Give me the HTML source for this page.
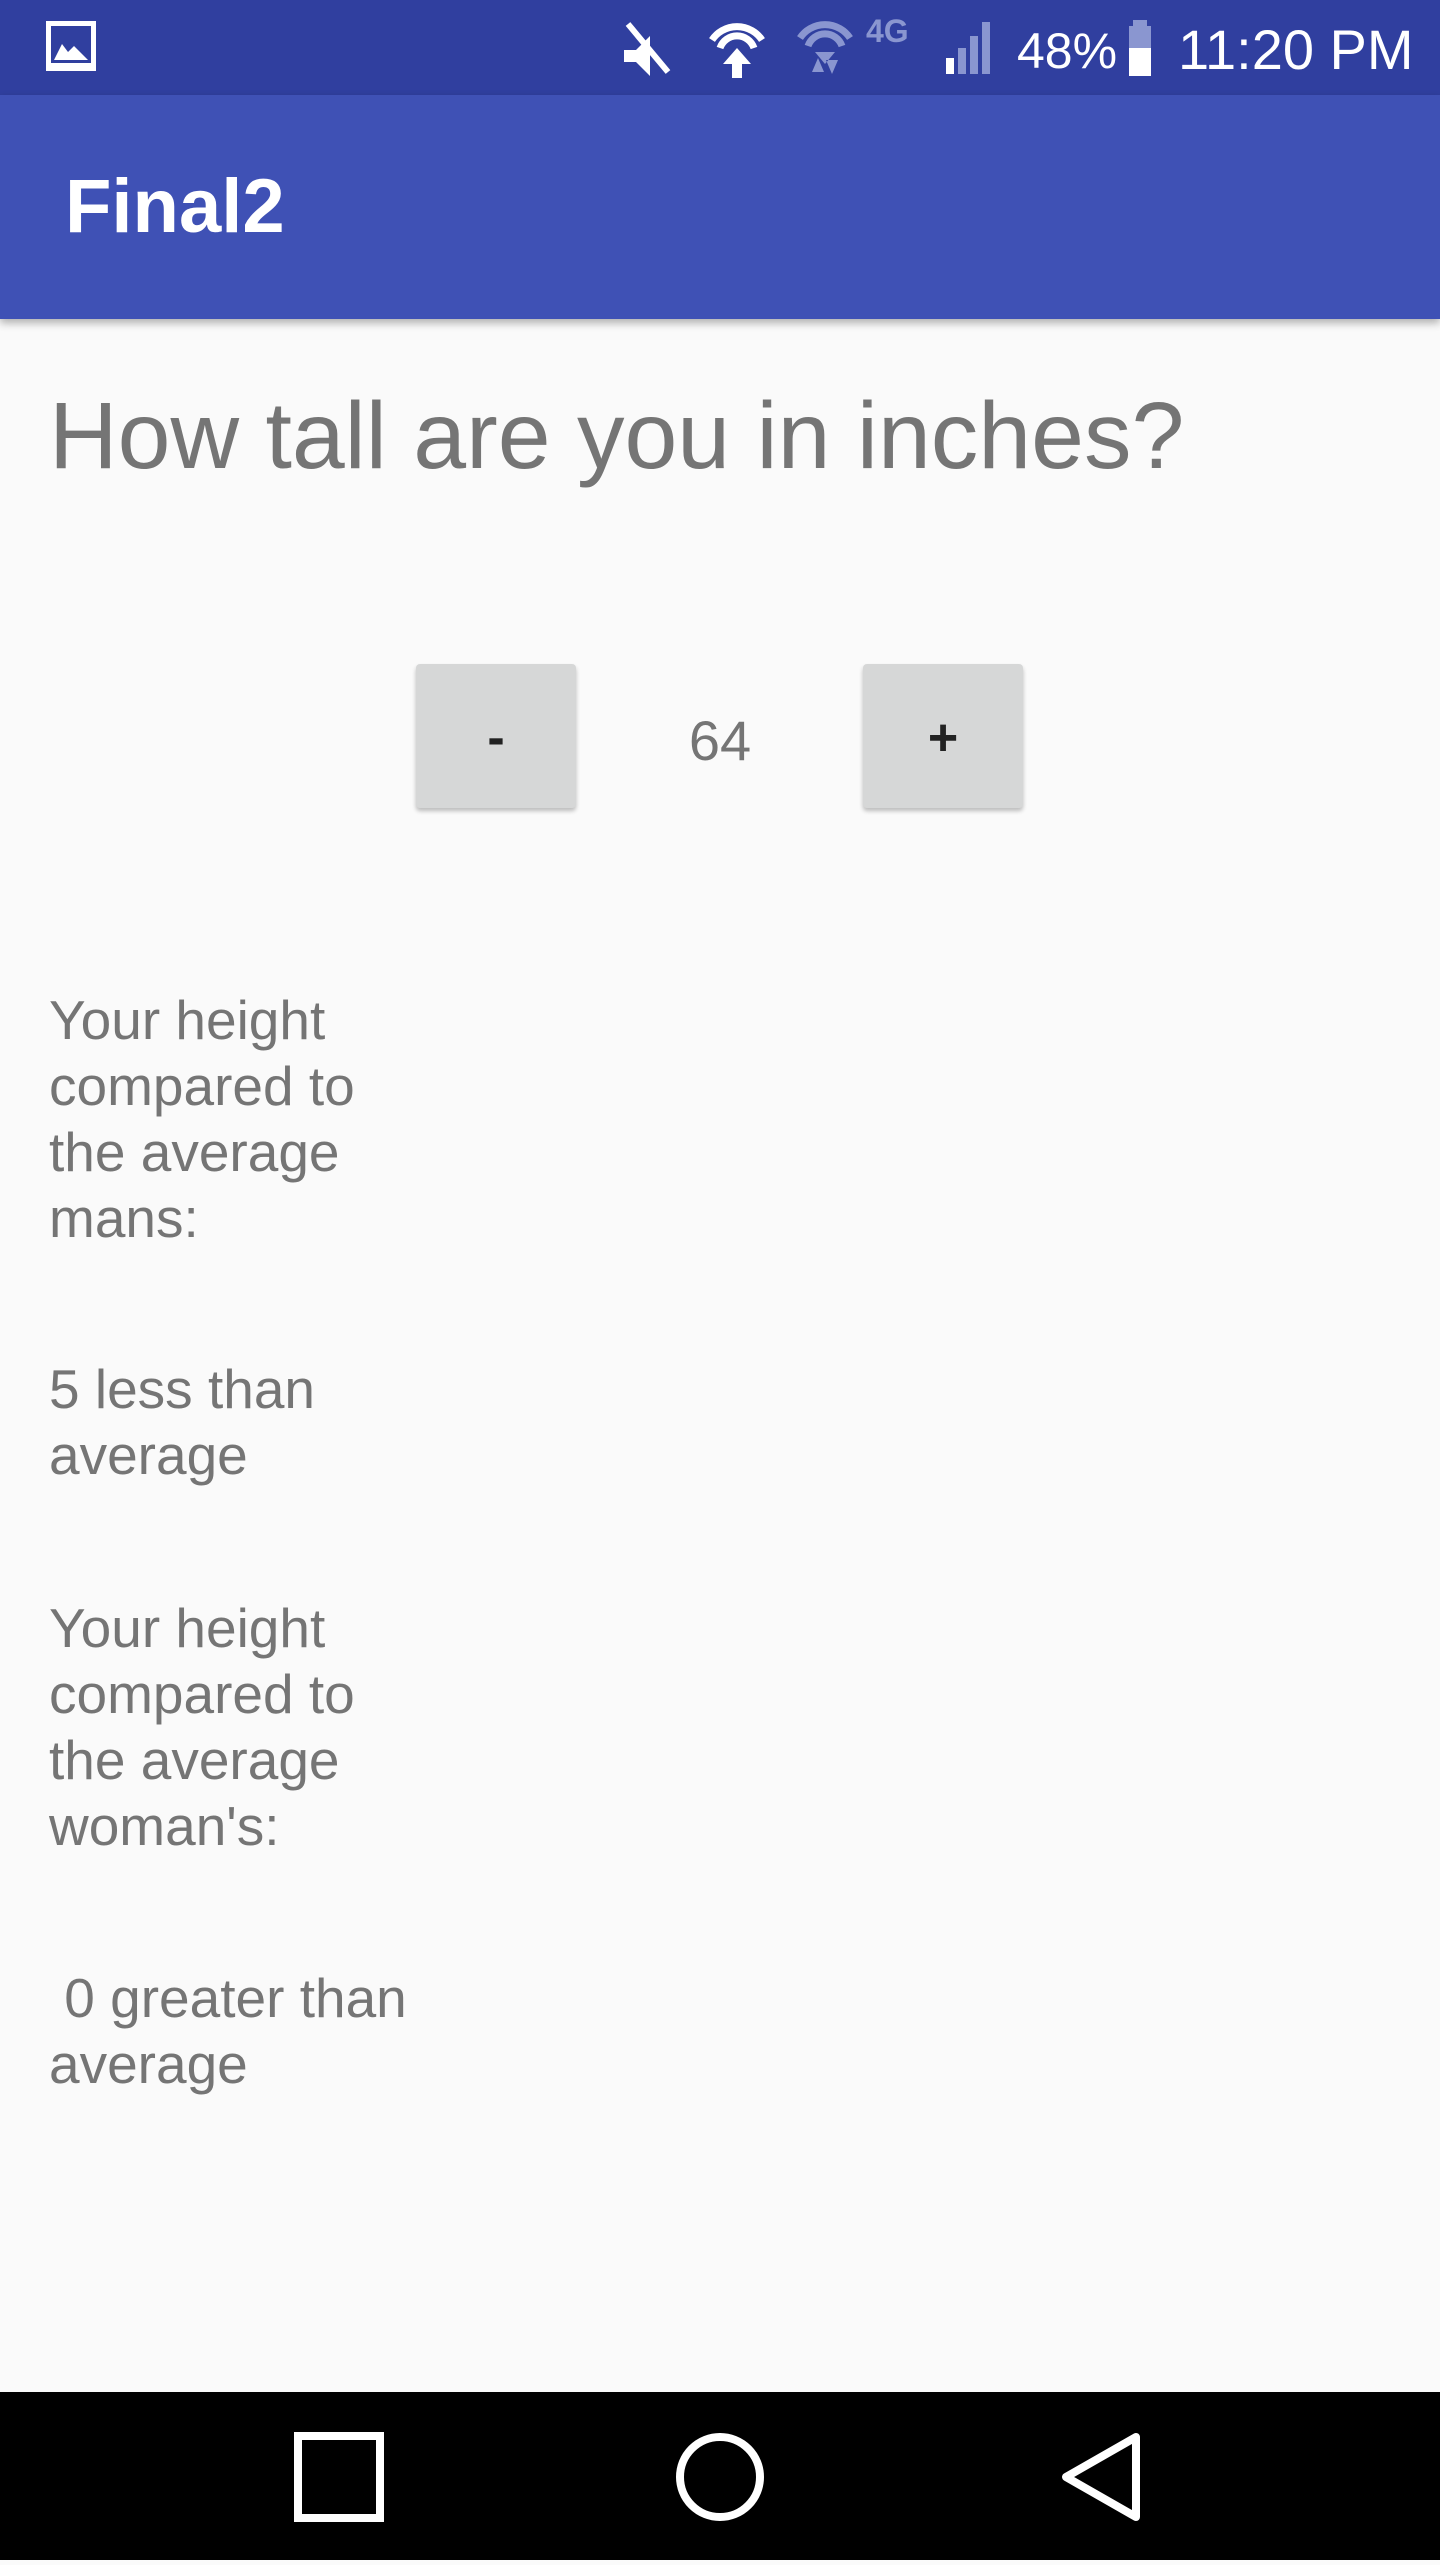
<!DOCTYPE html>
<html><head><meta charset="utf-8"><style>
*{margin:0;padding:0;box-sizing:border-box}
body{width:1440px;height:2560px;background:#FAFAFA;font-family:"Liberation Sans",sans-serif;position:relative;overflow:hidden}
.sb{position:absolute;top:0;left:0;width:1440px;height:95px;background:#303F9F}
.ab{position:absolute;top:95px;left:0;width:1440px;height:224px;background:#3F51B5;box-shadow:0 4px 8px rgba(0,0,0,.3)}
.t{position:absolute;color:#757575;white-space:nowrap}
.btn{position:absolute;width:160px;height:144px;background:#D6D7D7;border-radius:4px;box-shadow:0 3px 4px rgba(0,0,0,.25);color:#222;font-size:52px;font-weight:bold;text-align:center;line-height:148px}
.nav{position:absolute;top:2392px;left:0;width:1440px;height:168px;background:#000}
.p{font-size:55px;line-height:66px;left:49px}
</style></head><body>
<div class="sb">
<svg width="1440" height="95" style="position:absolute;left:0;top:0">
<rect x="46" y="21" width="50" height="50" fill="#fff"/><rect x="51" y="26" width="40" height="37" fill="#303F9F"/>
<path d="M54 60 L62 44 L68 52 L74 46 L88 60 Z" fill="#fff"/>
<path d="M624 50 h12 l14 -14 v40 l-14 -14 h-12z" fill="#fff"/><path d="M628 24 L668 72" stroke="#fff" stroke-width="6"/>
<path d="M712 40 a30 30 0 0 1 50 0 M720 48 a18 18 0 0 1 34 0" stroke="#fff" stroke-width="7" fill="none"/>
<path d="M737 48 l-14 16 h9 v14 h10 v-14 h9z" fill="#fff"/>
<path d="M800 38 a30 30 0 0 1 50 0 M808 46 a18 18 0 0 1 34 0" stroke="#8A96D0" stroke-width="7" fill="none"/>
<path d="M815 52 h20 l-10 12z M812 72 l6 -14 l6 14z M826 60 l6 14 l6 -14z" fill="#8A96D0"/>
<text x="866" y="42" font-size="32" font-weight="bold" fill="#8A96D0" font-family="Liberation Sans">4G</text>
<rect x="946" y="58" width="8" height="16" fill="#fff"/><rect x="958" y="48" width="8" height="26" fill="#8A96D0"/><rect x="970" y="36" width="8" height="38" fill="#8A96D0"/><rect x="982" y="22" width="8" height="52" fill="#8A96D0"/>
<text x="1017" y="68" font-size="50" fill="#fff" font-family="Liberation Sans">48%</text>
<rect x="1133" y="20" width="14" height="8" fill="#8A96D0"/><rect x="1129" y="26" width="22" height="22" fill="#8A96D0"/><rect x="1129" y="48" width="22" height="28" fill="#fff"/>
<text x="1178" y="69" font-size="56" fill="#fff" font-family="Liberation Sans">11:20 PM</text>
</svg></div>
<div class="ab"><div style="position:absolute;left:65px;top:72px;font-size:76px;color:#fff;font-weight:bold;line-height:80px">Final2</div></div>
<div class="t" style="left:49px;top:386px;font-size:95px;line-height:100px">How tall are you in inches?</div>
<div class="btn" style="left:416px;top:664px">-</div>
<div class="t" style="left:640px;top:708px;width:160px;text-align:center;font-size:56px;line-height:66px">64</div>
<div class="btn" style="left:863px;top:664px">+</div>
<div class="t p" style="top:987px">Your height<br>compared to<br>the average<br>mans:</div>
<div class="t p" style="top:1356px">5 less than<br>average</div>
<div class="t p" style="top:1595px">Your height<br>compared to<br>the average<br>woman's:</div>
<div class="t p" style="top:1965px">&nbsp;0 greater than<br>average</div>
<div class="nav"><svg width="1440" height="168">
<rect x="298" y="44" width="82" height="82" fill="none" stroke="#fff" stroke-width="8"/>
<circle cx="720" cy="85" r="40" fill="none" stroke="#fff" stroke-width="8"/>
<path d="M1136 45 L1136 125 L1066 85 Z" fill="none" stroke="#fff" stroke-width="8" stroke-linejoin="round"/>
</svg></div>
</body></html>
